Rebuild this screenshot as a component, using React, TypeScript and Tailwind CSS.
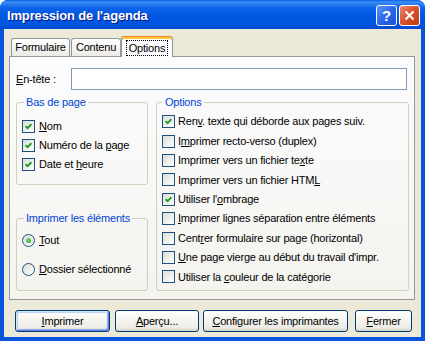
import React from "react";

const Acc = ({ t, u }: { t: string; u: number }) => (
  <>
    {t.slice(0, u)}
    <u className="underline-offset-[1px]">{t[u]}</u>
    {t.slice(u + 1)}
  </>
);

const CheckBox = ({ checked }: { checked?: boolean }) => (
  <span className="flex h-[13px] w-[13px] shrink-0 items-center justify-center border border-[#1c5180] bg-[linear-gradient(135deg,#dcdcd7,#ffffff)]">
    {checked && (
      <svg width="7" height="7" viewBox="0 0 7 7">
        <path d="M0.6 3.2 L2.6 5.2 L6.4 1.2" fill="none" stroke="#21a121" strokeWidth="1.9" />
      </svg>
    )}
  </span>
);

const Radio = ({ checked }: { checked?: boolean }) => (
  <span className="flex h-[13px] w-[13px] shrink-0 items-center justify-center rounded-full border border-[#1c5180] bg-[linear-gradient(135deg,#dcdcd7,#ffffff)]">
    {checked && (
      <span className="h-[5px] w-[5px] rounded-full bg-[radial-gradient(circle_at_35%_35%,#7be07a,#21a121)]" />
    )}
  </span>
);

const CheckRow = ({
  t,
  u,
  checked,
  gap = "gap-[4px]",
  h = "h-[19px]",
}: {
  t: string;
  u: number;
  checked?: boolean;
  gap?: string;
  h?: string;
}) => (
  <div className={`flex items-center ${gap} ${h}`}>
    <CheckBox checked={checked} />
    <span className="whitespace-nowrap">
      <Acc t={t} u={u} />
    </span>
  </div>
);

const XpButton = ({
  t,
  w,
  ml,
  isDefault,
}: {
  t: string;
  w: string;
  ml: string;
  isDefault?: boolean;
}) => (
  <div
    className={`${w} ${ml} flex h-[22px] items-center justify-center rounded-[3px] border border-[#003c74] bg-[linear-gradient(to_bottom,#ffffff_0%,#f6f5f0_40%,#ecebe6_85%,#d6d0c5_100%)] ${
      isDefault
        ? "shadow-[inset_1px_1px_0_#cee7ff,inset_-1px_-1px_0_#6982ee,inset_2px_2px_0_#bcd4f6,inset_-2px_-2px_0_#89ade4]"
        : ""
    }`}
  >
    <Acc t={t} u={0} />
  </div>
);

const Tab = ({ label, w }: { label: string; w: string }) => (
  <div
    className={`${w} flex h-[18px] items-center justify-center rounded-t-[3px] border border-b-0 border-[#919b9c] bg-[linear-gradient(to_bottom,#ffffff,#ecebe6)]`}
  >
    {label}
  </div>
);

export default function App() {
  return (
    <div className="flex h-[341px] w-[425px] flex-col overflow-hidden rounded-t-[8px] bg-[#0854de] font-['Liberation_Sans',Arial,sans-serif] text-[11px] tracking-[-0.2px] text-black">
      {/* title bar */}
      <div className="flex h-[29px] shrink-0 items-start bg-[linear-gradient(to_bottom,#0a5ee6_0%,#3d8ff4_7%,#2b80f1_13%,#0c62e8_28%,#0056e2_55%,#0054df_85%,#004ad2_100%)] pl-[7px] pr-[5px] pt-[5px]">
        <span className="flex-1 text-[13px] font-bold leading-[21px] tracking-[-0.15px] text-white [text-shadow:1px_1px_0_#0a1883]">
          Impression de l'agenda
        </span>
        <div className="flex h-[21px] w-[21px] items-center justify-center rounded-[3px] border border-white bg-[linear-gradient(135deg,#5a95fa,#2863e8_55%,#1a4fd8)] text-[15px] font-bold leading-none text-white">
          ?
        </div>
        <div className="ml-[2px] flex h-[21px] w-[21px] items-center justify-center rounded-[3px] border border-white bg-[linear-gradient(135deg,#eb8a6b,#d7522b_50%,#c2390f)]">
          <svg width="11" height="11" viewBox="0 0 11 11">
            <path d="M1.5 1.5 L9.5 9.5 M9.5 1.5 L1.5 9.5" stroke="#ffffff" strokeWidth="2" />
          </svg>
        </div>
      </div>

      {/* body */}
      <div className="mx-[4px] mb-[4px] flex flex-1 flex-col bg-[#ece9d8]">
        <div className="ml-[5px] mt-[7px] w-[406px]">
          {/* tabs */}
          <div className="flex h-[20px] items-end pl-[2px]">
            <Tab label="Formulaire" w="w-[59px]" />
            <div className="ml-[1px]">
              <Tab label="Contenu" w="w-[50px]" />
            </div>
            <div className="relative z-10 -mb-[1px] flex h-[21px] w-[52px] items-center justify-center rounded-t-[3px] border-x border-t border-x-[#919b9c] border-t-[#e68b2c] bg-[#fcfcfe] pt-[1px] shadow-[inset_0_2px_0_#ffc73c]">
              <span className="border border-dotted border-black px-[2px] leading-[14px]">
                Options
              </span>
            </div>
          </div>

          {/* panel */}
          <div className="h-[244px] border border-[#919b9c] bg-[linear-gradient(to_bottom,#fcfcfe,#f4f3ee)]">
            <div className="mt-[11px] flex items-center pl-[6px]">
              <span className="w-[55px]">
                <Acc t="En-tête :" u={0} />
              </span>
              <div className="h-[22px] w-[336px] border border-[#7f9db9] bg-white" />
            </div>

            <div className="mt-[6px] flex pl-[6px]">
              <div className="flex w-[132px] flex-col">
                <fieldset className="h-[89px] rounded-[3px] border border-[#d0d0bf] pl-[5px] pt-[8px]">
                  <legend className="ml-[2px] px-[2px] leading-[13px] text-[#0046d5]">
                    Bas de page
                  </legend>
                  <CheckRow t="Nom" u={0} checked />
                  <CheckRow t="Numéro de la page" u={13} checked />
                  <CheckRow t="Date et heure" u={8} checked />
                </fieldset>
                <fieldset className="mt-[27px] flex h-[79px] flex-col gap-[10px] rounded-[3px] border border-[#d0d0bf] pl-[5px] pt-[6px]">
                  <legend className="ml-[2px] px-[2px] leading-[13px] text-[#0046d5]">
                    Imprimer les éléments
                  </legend>
                  <div className="flex h-[19px] items-center gap-[4px]">
                    <Radio checked />
                    <span>
                      <Acc t="Tout" u={0} />
                    </span>
                  </div>
                  <div className="flex h-[19px] items-center gap-[4px]">
                    <Radio />
                    <span>
                      <Acc t="Dossier sélectionné" u={0} />
                    </span>
                  </div>
                </fieldset>
              </div>

              <fieldset className="ml-[8px] h-[195px] w-[253px] rounded-[3px] border border-[#d0d0bf] pl-[5px] pt-[3px]">
                <legend className="ml-[1px] px-[2px] leading-[13px] text-[#0046d5]">
                  Options
                </legend>
                {[
                  ["Renv. texte qui déborde aux pages suiv.", 3, true],
                  ["Imprimer recto-verso (duplex)", 1, false],
                  ["Imprimer vers un fichier texte", 27, false],
                  ["Imprimer vers un fichier HTML", 28, false],
                  ["Utiliser l'ombrage", 11, true],
                  ["Imprimer lignes séparation entre éléments", 0, false],
                  ["Centrer formulaire sur page (horizontal)", 4, false],
                  ["Une page vierge au début du travail d'impr.", 0, false],
                  ["Utiliser la couleur de la catégorie", 12, false],
                ].map(([t, u, c]) => (
                  <CheckRow
                    key={t as string}
                    t={t as string}
                    u={u as number}
                    checked={c as boolean}
                    gap="gap-[3px]"
                    h="h-[19.4px]"
                  />
                ))}
              </fieldset>
            </div>
          </div>
        </div>

        {/* buttons */}
        <div className="mt-[10px] flex pl-[11px]">
          <XpButton t="Imprimer" w="w-[95px]" ml="ml-0" isDefault />
          <XpButton t="Aperçu..." w="w-[84px]" ml="ml-[5px]" />
          <XpButton t="Configurer les imprimantes" w="w-[145px]" ml="ml-[4px]" />
          <XpButton t="Fermer" w="w-[57px]" ml="ml-[7px]" />
        </div>
      </div>
    </div>
  );
}
